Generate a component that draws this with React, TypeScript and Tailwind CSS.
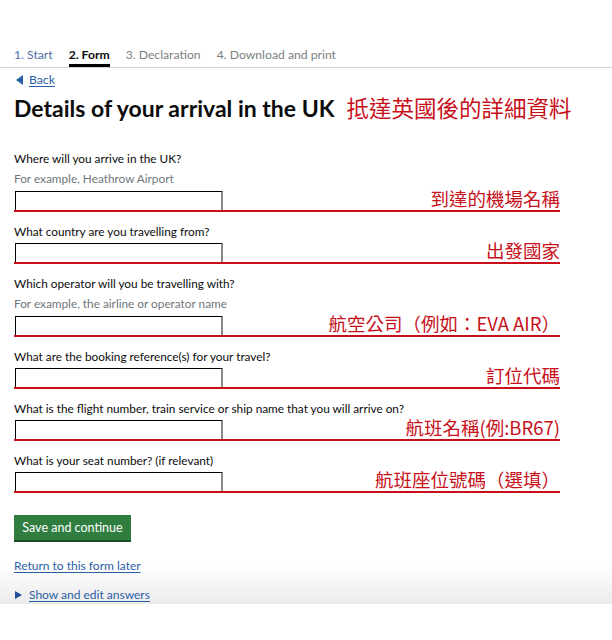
import React from "react";

type Field = {
  label: string;
  hint?: string;
  note: string;
};

const fields: Field[] = [
  { label: "Where will you arrive in the UK?", hint: "For example, Heathrow Airport", note: "到達的機場名稱" },
  { label: "What country are you travelling from?", note: "出發國家" },
  { label: "Which operator will you be travelling with?", hint: "For example, the airline or operator name", note: "航空公司（例如：EVA AIR）" },
  { label: "What are the booking reference(s) for your travel?", note: "訂位代碼" },
  { label: "What is the flight number, train service or ship name that you will arrive on?", note: "航班名稱(例:BR67)" },
  { label: "What is your seat number? (if relevant)", note: "航班座位號碼（選填）" },
];

const cjk = "font-['Noto_Sans_CJK_TC','Noto_Sans',sans-serif]";

const FormField = ({ label, hint, note }: Field) => (
  <div className="mb-[12px]">
    <p className="text-[11.8px] leading-[16px] text-[#0b0c0c]">{label}</p>
    {hint && <p className="mt-[4px] text-[11.8px] leading-[16px] text-[#6f777b]">{hint}</p>}
    <div className={`flex items-end justify-between w-[546px] h-[21px] border-b-2 border-[#c8101a] ${hint ? "mt-[4px]" : "mt-[3px]"}`}>
      <input className="ml-[1px] w-[208px] h-[19px] border-t border-l border-black border-r-2 border-r-[#8a8a8a] outline-none" />
      <span className={`${cjk} text-[18.5px] leading-[19px] text-[#c8101a] mb-[2px]`}>{note}</span>
    </div>
  </div>
);

export default function App() {
  return (
    <div className="w-[612px] h-[640px] bg-white font-['Lato',sans-serif] overflow-hidden">
      <div className="h-[604px] px-[14px] bg-[linear-gradient(to_bottom,#ffffff_0px,#ffffff_566px,#ebebeb_604px)]">
        <nav className="pt-[47px] -mx-[14px] px-[14px] border-b border-[#d4d4d4] flex gap-[16px] text-[12.2px] leading-[16px]">
          <span className="pb-[1px] border-b-[3px] border-transparent text-[#4c6fa6]">1. Start</span>
          <span className="pb-[1px] border-b-[3px] border-black font-bold text-[#0b0c0c]">2. Form</span>
          <span className="pb-[1px] border-b-[3px] border-transparent text-[#7a7f82]">3. Declaration</span>
          <span className="pb-[1px] border-b-[3px] border-transparent text-[#7a7f82]">4. Download and print</span>
        </nav>

        <a className="mt-[4px] flex items-center gap-[6px] text-[12.2px] leading-[16px] text-[#2b5ea8]">
          <svg width="7" height="10" viewBox="0 0 7 10" className="ml-[2px]">
            <path d="M7 0 L0 5 L7 10 Z" fill="#2b5ea8" />
          </svg>
          <span className="underline underline-offset-2">Back</span>
        </a>

        <div className="mt-[6px] flex items-center gap-[12px] h-[28px]">
          <h1 className="text-[23px] font-bold text-[#0b0c0c]">Details of your arrival in the UK</h1>
          <span className={`${cjk} text-[22.5px] text-[#c8101a]`}>抵達英國後的詳細資料</span>
        </div>

        <div className="mt-[29px]">
          {fields.map((f) => (
            <FormField key={f.label} {...f} />
          ))}
        </div>

        <button className="mt-[10px] w-[117px] h-[25px] bg-[#2f7d3f] shadow-[0_2px_0_#1d4f27] text-white text-[12.5px] leading-[23px]">
          Save and continue
        </button>

        <p className="mt-[18px] text-[12px] leading-[16px] text-[#2b5ea8] underline underline-offset-2">
          Return to this form later
        </p>

        <div className="mt-[13px] flex items-center gap-[7px] text-[12px] leading-[16px] text-[#2b5ea8]">
          <svg width="7" height="8" viewBox="0 0 7 8" className="ml-[1px]">
            <path d="M0 0 L7 4 L0 8 Z" fill="#1f4f99" />
          </svg>
          <span className="underline underline-offset-2">Show and edit answers</span>
        </div>
      </div>
    </div>
  );
}
